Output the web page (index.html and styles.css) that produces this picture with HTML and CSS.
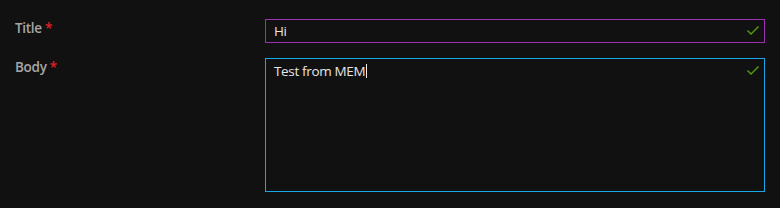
FILE: index.html
```html
<!DOCTYPE html>
<html>
<head>
<meta charset="utf-8">
<link rel="stylesheet" href="styles.css">
</head>
<body>
<div class="form">
  <div class="row">
    <div class="label">Title <span class="req">*</span></div>
    <div class="field single">
      <span class="value">Hi</span>
      <svg class="check" width="14" height="10" viewBox="0 0 14 10"><path d="M1.5 4.5 L5 8 L12.5 0.5" fill="none" stroke="#5a9e0f" stroke-width="1.4"/></svg>
    </div>
  </div>
  <div class="row">
    <div class="label">Body <span class="req">*</span></div>
    <div class="field multi">
      <span class="value">Test from MEM<span class="caret"></span></span>
      <svg class="check" width="14" height="10" viewBox="0 0 14 10"><path d="M1.5 4.5 L5 8 L12.5 0.5" fill="none" stroke="#5a9e0f" stroke-width="1.4"/></svg>
    </div>
  </div>
</div>
</body>
</html>
```

FILE: styles.css
```css
html, body {
  margin: 0;
  padding: 0;
  background: #111111;
  width: 780px;
  height: 208px;
  overflow: hidden;
}
.form {
  display: flex;
  flex-direction: column;
  gap: 15px;
  padding: 19px 0 0 15px;
  font-family: "Open Sans", "Liberation Sans", sans-serif;
}
.row {
  display: grid;
  grid-template-columns: 250px 500px;
  align-items: start;
}
.label {
  color: #a6a6a6;
  font-size: 13.5px;
  font-weight: 600;
  line-height: 20px;
  letter-spacing: -0.3px;
  margin-top: -1px;
}
.req {
  color: #e0202c;
}
.field {
  box-sizing: border-box;
  display: flex;
  justify-content: space-between;
  color: #e6e6e6;
  font-size: 13.5px;
  letter-spacing: -0.35px;
  line-height: 22px;
  padding: 0 4px 0 8px;
}
.single {
  height: 24px;
  border: 1px solid #9b30b1;
  align-items: center;
}
.multi {
  height: 134px;
  border: 1px solid #1aa7e8;
  align-items: flex-start;
  padding-top: 1px;
}
.multi .check {
  margin-top: 6px;
}
.value {
  display: inline-flex;
  align-items: center;
}
.caret {
  display: inline-block;
  width: 1px;
  height: 14px;
  background: #f0f0f0;
  margin-left: 1px;
}
```
